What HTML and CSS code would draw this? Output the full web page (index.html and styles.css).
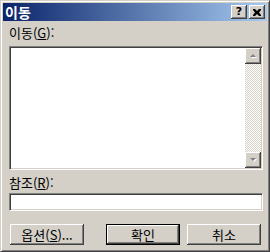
FILE: index.html
```html
<!DOCTYPE html>
<html lang="ko">
  <head>
    <meta charset="UTF-8" />
    <title>이동</title>
    <link rel="stylesheet" href="styles.css">
  </head>
  <body>
    <div class="window">
      <div class="titlebar">
        <span class="title">이동</span>
        <div class="tbtns">
          <button class="tbtn">?</button>
          <button class="tbtn">
            <svg width="8" height="7" viewBox="0 0 8 7">
              <path d="M0 0h2l2 2 2-2h2v1L6 3.5 8 6v1H6L4 5 2 7H0V6l2-2.5L0 1z" fill="#000"/>
            </svg>
          </button>
        </div>
      </div>

      <div class="content">
        <label class="lbl">이동(<u>G</u>):</label>
        <div class="listbox">
          <div class="list-area"></div>
          <div class="scrollbar">
            <div class="sbtn">
              <svg width="7" height="5" viewBox="0 0 7 5">
                <path d="M1 4h6L4 1z" fill="#fff"/>
                <path d="M0 3h6L3 0z" fill="#808080"/>
              </svg>
            </div>
            <div class="track"></div>
            <div class="sbtn">
              <svg width="7" height="5" viewBox="0 0 7 5">
                <path d="M1 1h6L4 4z" fill="#fff"/>
                <path d="M0 0h6L3 3z" fill="#808080"/>
              </svg>
            </div>
          </div>
        </div>

        <label class="lbl lbl-ref">참조(<u>R</u>):</label>
        <input class="edit" type="text" />

        <div class="buttons">
          <button class="btn">옵션(<u>S</u>)...</button>
          <button class="btn btn-default">확인</button>
          <button class="btn">취소</button>
        </div>
      </div>
    </div>
  </body>
</html>
```

FILE: styles.css
```css
body {
  margin: 0;
  padding: 0;
  background-color: #d4d0c8;
  font-family: "Noto Sans CJK KR", "DejaVu Sans", sans-serif;
  font-size: 13px;
}

.window {
  width: 270px;
  height: 252px;
  box-sizing: border-box;
  background: #d4d0c8;
  border: 1px solid;
  border-color: #d4d0c8 #404040 #404040 #d4d0c8;
  box-shadow: inset 1px 1px #fff, inset -1px -1px #808080;
  padding: 2px;
}

.titlebar {
  height: 18px;
  display: flex;
  align-items: center;
  justify-content: space-between;
  background: linear-gradient(to right, #0a246a, #a6caf0);
  padding: 0 2px 0 2px;
}

.title {
  color: #fff;
  font-weight: bold;
  font-size: 14px;
  line-height: 16px;
}

.tbtns {
  display: flex;
  gap: 2px;
}

.tbtn {
  width: 16px;
  height: 14px;
  padding: 0;
  margin: 0;
  border: none;
  background: #d4d0c8;
  box-shadow: inset -1px -1px #404040, inset 1px 1px #fff, inset -2px -2px #808080;
  font-family: "DejaVu Sans", sans-serif;
  font-weight: bold;
  font-size: 11px;
  line-height: 12px;
  display: flex;
  align-items: center;
  justify-content: center;
  color: #000;
}

.content {
  padding: 5px 4px 0 6px;
}

.lbl {
  display: block;
  height: 14px;
  line-height: 14px;
  color: #000;
}

.listbox {
  margin-top: 6px;
  height: 124px;
  box-sizing: border-box;
  display: flex;
  background: #fff;
  border: 1px solid;
  border-color: #808080 #fff #fff #808080;
  box-shadow: inset 1px 1px #404040, inset -1px -1px #d4d0c8;
  padding: 1px;
}

.list-area {
  flex: 1;
}

.scrollbar {
  width: 16px;
  display: flex;
  flex-direction: column;
}

.sbtn {
  height: 16px;
  background: #d4d0c8;
  box-shadow: inset -1px -1px #404040, inset 1px 1px #fff, inset -2px -2px #808080;
  display: flex;
  align-items: center;
  justify-content: center;
}

.track {
  flex: 1;
  background: repeating-conic-gradient(#d4d0c8 0 25%, #fff 0 50%) 0 0 / 2px 2px;
}

.lbl-ref {
  margin-top: 6px;
}

.edit {
  display: block;
  margin: 3px 0 0;
  width: 100%;
  height: 18px;
  box-sizing: border-box;
  border: 1px solid;
  border-color: #808080 #fff #fff #808080;
  box-shadow: inset 1px 1px #404040, inset -1px -1px #d4d0c8;
  background: #fff;
  outline: none;
}

.buttons {
  display: flex;
  margin-top: 13px;
  padding-left: 1px;
}

.btn {
  width: 74px;
  height: 21px;
  margin: 0;
  padding: 0;
  border: none;
  background: #d4d0c8;
  box-shadow: inset -1px -1px #404040, inset 1px 1px #fff, inset -2px -2px #808080;
  font-family: "Noto Sans CJK KR", "DejaVu Sans", sans-serif;
  font-size: 13px;
  line-height: 15px;
  color: #000;
}

.btn-default {
  margin-left: 22px;
  border: 1px solid #000;
}

.btn-default + .btn {
  margin-left: 7px;
}
```
